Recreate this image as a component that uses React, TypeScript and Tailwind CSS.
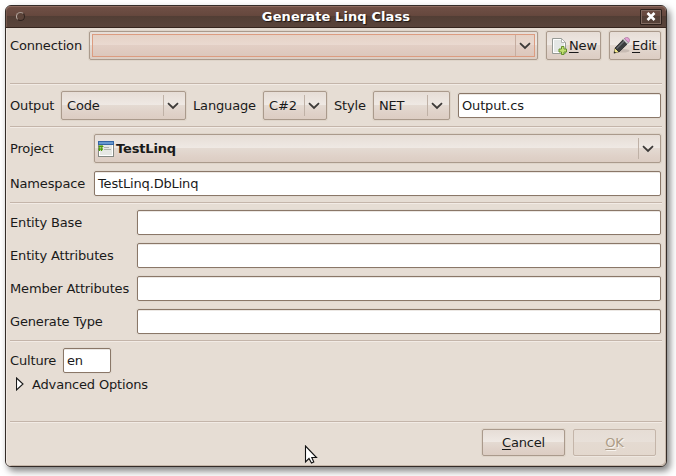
import React from "react";

const bevel =
  "border border-[#aa9a8c] rounded-[2px] shadow-[0_0_0_1px_#ded4c9] bg-[linear-gradient(to_bottom,#e6ddd6_0%,#efe9e4_48%,#e4dad2_50%,#dfd1c8_80%,#dccdc3_100%)]";

function Chevron() {
  return (
    <svg width="12" height="8" viewBox="0 0 12 8" className="block">
      <path d="M1 1.2 L6 6 L11 1.2" fill="none" stroke="#3c3a38" strokeWidth="1.8" />
    </svg>
  );
}

function Combo({ className, children }: { className: string; children?: React.ReactNode }) {
  return (
    <div className={`flex h-[29px] shrink-0 items-center ${bevel} ${className}`}>
      <div className="flex min-w-0 flex-1 items-center">{children}</div>
      <div className="flex h-[21px] w-[22px] items-center border-l border-[#bfb1a6] pl-[3px]">
        <Chevron />
      </div>
    </div>
  );
}

function Entry({ className, children }: { className: string; children?: React.ReactNode }) {
  return (
    <div
      className={`flex h-[25px] shrink-0 items-center rounded-[2px] border border-[#8a7768] bg-white pl-[3px] shadow-[0_0_0_1px_#e0d8cf,inset_0_1px_0_#ece8e4] ${className}`}
    >
      {children}
    </div>
  );
}

function Rule() {
  return <div className="h-[2px] w-[652px] shrink-0 border-t border-[#c4b5aa] bg-[#f2ebe5]" />;
}

function Key({ children }: { children: React.ReactNode }) {
  return <span className="underline decoration-1 underline-offset-2 [text-decoration-skip-ink:none]">{children}</span>;
}

function NewIcon() {
  return (
    <svg width="16" height="18" viewBox="0 0 16 18" className="block shrink-0">
      <path d="M1.5 1.5 H10.5 L14.5 5.5 V16.5 H1.5 Z" fill="#e4e7e5" stroke="#969a95" />
      <path d="M2.5 2.5 H10 L13.5 6 V15.5 H2.5 Z" fill="none" stroke="#fff" />
      <path d="M10.5 1.5 V5.5 H14.5 Z" fill="#fff" stroke="#a5a8a3" strokeWidth=".8" />
      <path d="M10.5 9.5 h2.5 v2.5 h2.5 v3 h-2.5 v2.5 h-2.5 v-2.5 h-2.5 v-3 h2.5 Z" fill="#c2df73" stroke="#65912a" />
    </svg>
  );
}

function PencilIcon() {
  return (
    <svg width="17" height="17" viewBox="0 0 17 17" className="block shrink-0">
      <ellipse cx="10" cy="13.8" rx="6.5" ry="1.8" fill="#a89c94" opacity=".45" />
      <path d="M1 16 L2 11 L6 15 Z" fill="#f3e78a" stroke="#77704a" strokeWidth=".7" />
      <path d="M2 11 L10 2.8 L14.2 7 L6 15 Z" fill="#3b3d3f" stroke="#222426" strokeWidth=".8" />
      <path d="M3.6 11.6 L11.2 4" stroke="#6f7376" strokeWidth="1.2" />
      <path d="M10 2.8 L11.3 1.5 L15.5 5.7 L14.2 7 Z" fill="#d2d4d5" stroke="#777" strokeWidth=".5" />
      <path d="M11.3 1.5 Q13.8 -.8 15.8 1.2 Q17.8 3.4 15.5 5.7 Z" fill="#e3a1d5" stroke="#9c6990" strokeWidth=".6" />
      <path d="M.8 16.4 L1.3 14.2 L3 15.7 Z" fill="#222" />
    </svg>
  );
}

function ProjectIcon() {
  return (
    <svg width="17" height="16" viewBox="0 0 17 16" className="block shrink-0">
      <rect x=".5" y=".5" width="15" height="15" fill="#e6e8e4" stroke="#858983" />
      <rect x="1.5" y="3.5" width="13" height="11" fill="none" stroke="#fff" />
      <rect x="0" y="0" width="16" height="4" fill="#3465a4" />
      <rect x="1" y="1" width="14" height="2" fill="#6698cf" />
      <path d="M6 6.5 H11 M6 8.5 H13" stroke="#b0b4ac" />
      <path d="M2 4 L1.5 10 M4 4 L3.5 10 M.6 5.5 H5.4 M.3 8.2 H5" stroke="#4e9a06" strokeWidth="1.2" />
    </svg>
  );
}

const entityFields = ["Entity Base", "Entity Attributes", "Member Attributes", "Generate Type"];

export default function App() {
  return (
    <div className="relative h-[476px] w-[676px] overflow-hidden bg-white pl-[5px] pt-[5px] font-['DejaVu_Sans',sans-serif] text-[13px] leading-[16px] tracking-[-0.16px] text-[#1a1a1a]">
      <div className="flex h-[462px] w-[662px] flex-col rounded-[6px] border border-[#342c28] bg-[#e6ddd4] shadow-[3px_4px_7px_rgba(0,0,0,0.5)]">
        <div className="flex h-[22px] shrink-0 items-center rounded-t-[5px] border-b border-[#35251e] bg-[linear-gradient(to_bottom,#705046_0%,#66483e_45%,#523e35_50%,#59443b_100%)] shadow-[inset_0_1px_0_#8e6b60,inset_1px_0_0_#76584d]">
          <div className="ml-[10px] size-[9px] rounded-full border border-[#2f231f] border-l-[#bdaea7] border-t-[#a89890] bg-[#5b4339]" />
          <div className="flex-1 pl-[9px] pr-[2px] text-center text-[13px] font-bold tracking-[0.1px] text-white [text-shadow:1px_1px_1px_#1c1512]">
            Generate Linq Class
          </div>
          <div className="mr-[4px] flex h-[16px] w-[22px] items-center justify-center rounded-[1px] border border-[#2e211c] shadow-[inset_0_0_0_1px_#806a60]">
            <svg width="10" height="9" viewBox="0 0 10 9">
              <path d="M1.5 1 L8.5 8 M8.5 1 L1.5 8" stroke="#fff" strokeWidth="2.6" />
            </svg>
          </div>
        </div>
        <div className="flex flex-1 flex-col rounded-b-[5px] pl-[4px] pt-[3px] shadow-[inset_1px_0_0_#f0e9e3,inset_-1px_-1px_0_#c6b7aa]">
          <div className="flex h-[29px] shrink-0 items-center">
            <span className="w-[79px] shrink-0">Connection</span>
            <div className={`h-[29px] w-[449px] shrink-0 p-[2px] ${bevel}`}>
              <div className="flex h-full items-center border border-[#dc9c80] bg-[linear-gradient(to_bottom,#e5d2c6_0%,#ead9d0_48%,#e2cec4_50%,#dcc7bc_100%)]">
                <div className="flex-1" />
                <div className="flex h-full w-[19px] items-center border-l border-[#c6ada0] pl-[3px]">
                  <Chevron />
                </div>
              </div>
            </div>
            <div className={`ml-[8px] flex h-[29px] w-[55px] shrink-0 items-center pl-[4px] ${bevel}`}>
              <NewIcon />
              <span className="ml-[2px]"><Key>N</Key>ew</span>
            </div>
            <div className={`ml-[8px] flex h-[29px] w-[52px] shrink-0 items-center pl-[3px] ${bevel}`}>
              <PencilIcon />
              <span className="ml-[2px]"><Key>E</Key>dit</span>
            </div>
          </div>
          <div className="h-[23px] shrink-0" />
          <Rule />
          <div className="mt-[6px] flex h-[29px] shrink-0 items-center">
            <span className="w-[51px] shrink-0">Output</span>
            <Combo className="w-[125px] pl-[5px]">Code</Combo>
            <span className="w-[77px] shrink-0 pl-[7px]">Language</span>
            <Combo className="w-[64px] pl-[5px]">C#2</Combo>
            <span className="w-[46px] shrink-0 pl-[7px]">Style</span>
            <Combo className="w-[77px] pl-[5px]">NET</Combo>
            <Entry className="ml-[8px] w-[203px]">Output.cs</Entry>
          </div>
          <div className="h-[6px] shrink-0" />
          <Rule />
          <div className="mt-[6px] flex h-[29px] shrink-0 items-center">
            <span className="w-[84px] shrink-0">Project</span>
            <Combo className="w-[567px] pl-[3px]">
              <ProjectIcon />
              <span className="ml-[1px] font-bold">TestLinq</span>
            </Combo>
          </div>
          <div className="mt-[8px] flex h-[25px] shrink-0 items-center">
            <span className="w-[84px] shrink-0">Namespace</span>
            <Entry className="w-[567px]">TestLinq.DbLinq</Entry>
          </div>
          <div className="h-[6px] shrink-0" />
          <Rule />
          <div className="mt-[6px] flex shrink-0 flex-col gap-[8px]">
            {entityFields.map((name) => (
              <div key={name} className="flex h-[25px] items-center">
                <span className="w-[127px] shrink-0">{name}</span>
                <Entry className="w-[524px]" />
              </div>
            ))}
          </div>
          <div className="h-[6px] shrink-0" />
          <Rule />
          <div className="mt-[6px] flex h-[25px] shrink-0 items-center">
            <span className="w-[53px] shrink-0">Culture</span>
            <Entry className="w-[48px]">en</Entry>
          </div>
          <div className="mt-[4px] flex h-[16px] shrink-0 items-center">
            <svg width="9" height="14" viewBox="0 0 9 14" className="mb-[2px] ml-[6px] block">
              <path d="M.5 1 L7 7 L.5 13 Z" fill="#fff" stroke="#1a1a1a" strokeWidth="1.1" />
            </svg>
            <span className="ml-[7px]">Advanced Options</span>
          </div>
          <div className="h-[28px] shrink-0" />
          <Rule />
          <div className="mt-[6px] flex h-[27px] w-[646px] shrink-0 justify-end gap-[8px]">
            <div className={`flex w-[83px] items-center justify-center ${bevel}`}>
              <span><Key>C</Key>ancel</span>
            </div>
            <div className="flex w-[83px] items-center justify-center rounded-[2px] border border-[#c4b5a9] bg-[linear-gradient(to_bottom,#e6ddd5,#e8e0d9_49%,#e4dad1_50%,#e3d8ce)] text-[#ac9c87] shadow-[0_1px_0_#eee7e0] [text-shadow:1px_1px_0_#f8f4ef]">
              <span><Key>O</Key>K</span>
            </div>
          </div>
        </div>
      </div>
      <svg width="14" height="20" viewBox="0 0 14 20" className="absolute left-[304px] top-[445px]">
        <path d="M1.5 1 V17 L5 13.5 L7.5 18 L9.8 17 L7.8 12.5 H12.5 Z" fill="#fff" stroke="#111" strokeWidth="1.1" />
      </svg>
    </div>
  );
}
